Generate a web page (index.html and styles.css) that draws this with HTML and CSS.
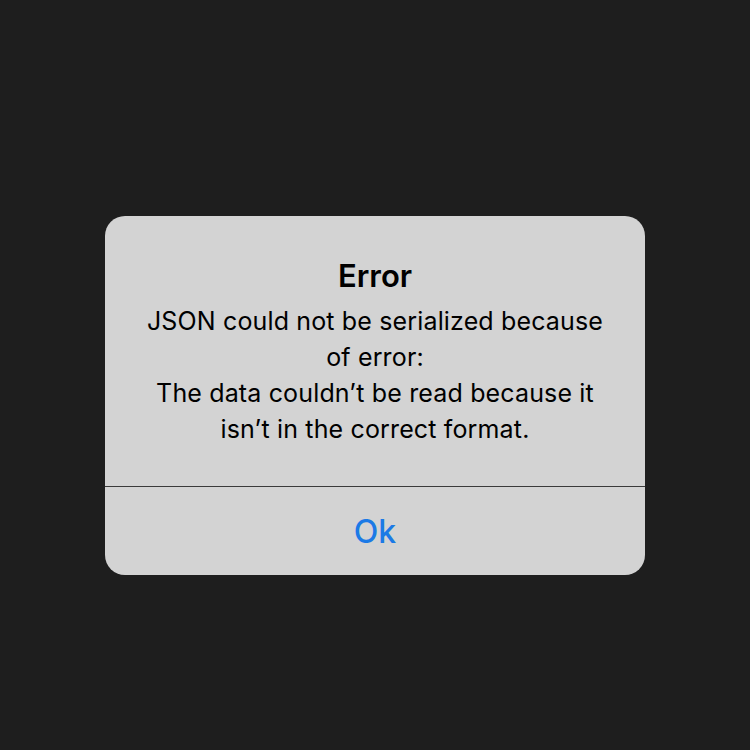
FILE: index.html
```html
<!DOCTYPE html>
<html>
<head>
<meta charset="utf-8">
<link rel="stylesheet" href="styles.css">
</head>
<body>
<div class="screen">
  <div class="alert">
    <div class="content">
      <div class="title">Error</div>
      <div class="message">JSON could not be serialized because of error:<br>The data couldn’t be read because it isn’t in the correct format.</div>
    </div>
    <div class="actions">
      <div class="btn">Ok</div>
    </div>
  </div>
</div>
</body>
</html>
```
FILE: styles.css
```css
html, body {
  margin: 0;
  padding: 0;
  background: #1e1e1e;
}
.screen {
  width: 750px;
  height: 750px;
  box-sizing: border-box;
  padding-top: 41px;
  display: flex;
  justify-content: center;
  align-items: center;
  font-family: Inter, "Noto Sans", sans-serif;
}
.alert {
  width: 540px;
  height: 359px;
  background: #d3d3d3;
  border-radius: 20px;
  overflow: hidden;
  display: flex;
  flex-direction: column;
}
.content {
  height: 271px;
  box-sizing: border-box;
  padding: 40px 34px 0;
  text-align: center;
  border-bottom: 1px solid #3a3a3a;
}
.title {
  font-size: 31px;
  font-weight: 600;
  color: #000;
  line-height: 40px;
}
.message {
  font-size: 25px;
  letter-spacing: 0.15px;
  color: #000;
  line-height: 36px;
  margin-top: 7px;
}
.actions {
  flex: 1;
  display: flex;
  align-items: center;
  justify-content: center;
}
.btn {
  color: #1b7ae6;
  font-size: 32px;
  font-weight: 500;
}
```
